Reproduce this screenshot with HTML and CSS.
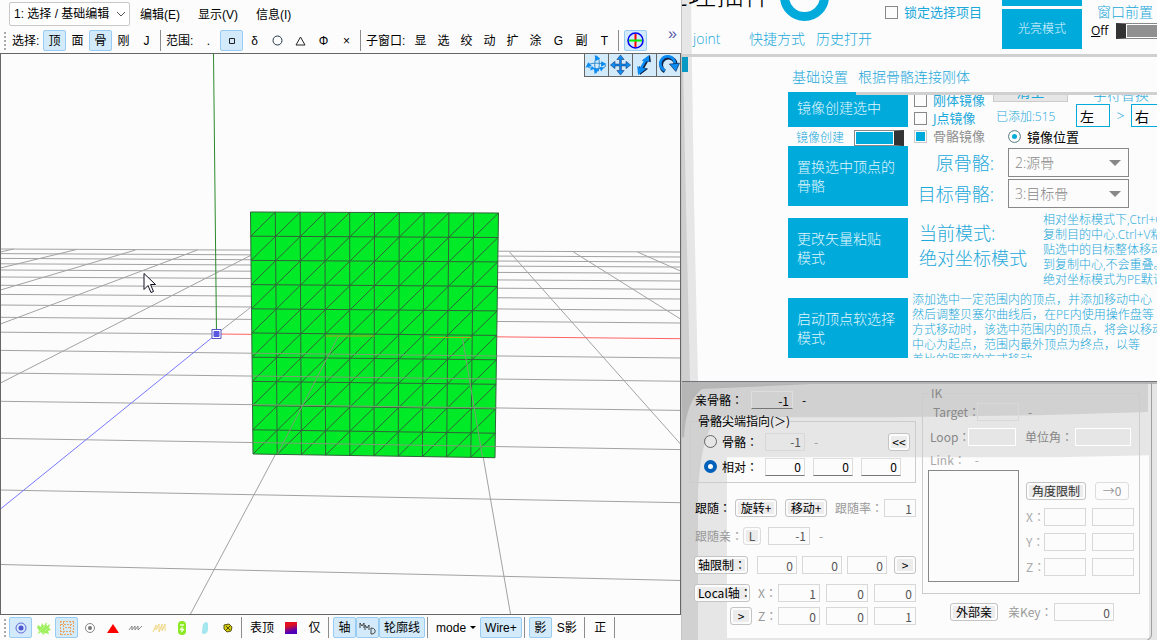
FILE: index.html
```html
<!DOCTYPE html>
<html lang="zh-CN">
<head>
<meta charset="utf-8">
<title>模型编辑器</title>
<link rel="stylesheet" href="styles.css">
</head>
<body>
<div class="workspace">
  <section class="editor">
    <header class="menubar">
      <span class="mode-box">
        <select class="mode-select" aria-label="编辑模式"><option>1: 选择 / 基础编辑</option></select>
        <svg class="mode-arrow" viewBox="0 0 10 6"><path d="M1 1l4 4 4-4" fill="none" stroke="#555"/></svg>
      </span>
      <button class="menu">编辑(E)</button>
      <button class="menu">显示(V)</button>
      <button class="menu">信息(I)</button>
    </header>
    <div class="toolbar">
      <i class="grip"></i>
      <span class="bar-label">选择:</span>
      <button class="tool on">顶</button><button class="tool">面</button><button class="tool on">骨</button><button class="tool">刚</button><button class="tool">J</button>
      <i class="sep"></i>
      <span class="bar-label">范围:</span>
      <button class="tool">.</button>
      <button class="tool on" aria-label="矩形"><svg width="8" height="8"><path d="M1.500 1.500h5v5h-5z" fill="none" stroke="#222"/></svg></button>
      <button class="tool">δ</button>
      <button class="tool" aria-label="圆形"><svg width="11" height="11"><circle cx="5.500" cy="5.500" r="4.500" fill="none" stroke="#234"/></svg></button>
      <button class="tool" aria-label="三角"><svg width="11" height="10"><path d="M5.500 1L10 9H1z" fill="none" stroke="#222"/></svg></button>
      <button class="tool">Φ</button><button class="tool">×</button>
      <i class="sep"></i>
      <span class="bar-label wide">子窗口:</span>
      <button class="tool">显</button><button class="tool">选</button><button class="tool">绞</button><button class="tool">动</button><button class="tool">扩</button><button class="tool">涂</button><button class="tool">G</button><button class="tool">副</button><button class="tool">T</button>
      <i class="sep"></i>
      <button class="tool on" aria-label="中心"><svg width="17" height="17"><path d="M8.500 2v13" stroke="#f00" stroke-width="2"/><path d="M2 8.500h13" stroke="#0e0" stroke-width="2"/><circle cx="8.500" cy="8.500" r="7.500" fill="none" stroke="#00e" stroke-width="1.500"/></svg></button>
      <button class="more" aria-label="更多">»</button>
    </div>
    <div class="viewport">
      <svg class="scene" viewBox="0 54 680 560" preserveAspectRatio="xMidYMid slice">
        <g id="ground" fill="none" stroke="#a2a2a2">
          <path d="M0 249L680 252M0 253.600L680 257M0 258.400L680 262M0 263.800L680 267M0 270L680 273.300M0 277L680 281M0 285.300L680 289.300M0 294.400L680 299M0 305L680 310.400M0 317.300L680 323M0 332.200L216 334M0 350.400L680 358M0 373L680 381.300M0 401.300L680 410.400M0 438.400L680 449.600M0 490L680 502.700M0 564.500L680 580.500"/>
          <path d="M13 249L0 252M76 249.500L0 268M135 250L0 290M197 250L0 324M250 255.500L0 383M250 307.500L216 334M338 336L190 614M462 338L510 614M509 252L680 444M573 252L680 319M637 252L680 271"/>
        </g>
        <path d="M213 54L216 334" stroke="#2a8a2a" stroke-width="1"/>
        <path d="M216 334L680 338.700" stroke="#ff6464"/>
        <path d="M216 334L0 509" stroke="#7878ff"/>
        <path d="M250 212L498 213L494.500 457.700L252.500 454z" fill="#00ea27"/>
        <path id="mesh" fill="none" stroke="#32623a" stroke-width="1"/>
        <g fill="none" stroke="#7f9f74"><path d="M251 353.200L497 356M252 376L496 379M252 404.700L496 408M253 442.500L495 446.500M338 336L277 454M462 338L482 457"/></g>
        <path d="M325 336H374M429 337.500H471" stroke="#b4a41c"/>
        <path d="M211.500 329.500h9v9h-9z" fill="#fff" stroke="#5656c8"/><path d="M213.500 331.500h5v5h-5z" fill="#5858e0" stroke="#5858e0"/>
        <path d="M143.500 273.500v16l4-4 3 7 2.500-1-3-7h5z" fill="#fff" stroke="#112"/>
      </svg>
      <div class="view-tools">
        <button aria-label="旋转"><svg viewBox="0 0 24 24"><g fill="none" stroke="#2a86c8" stroke-width="1"><ellipse cx="12" cy="13" rx="10" ry="3"/><path d="M12 2q-4 10 0 19M12 2q5 3 2 17"/></g><path d="M10 1l6 4-5 3zM10 22l5-5-6-2zM0 15l3-6 4 4zM23 11l-6-3v6zM5 18l5-2-3-3zM17 19l-2-5 5 1z" fill="#0a8cf4"/></svg></button>
        <button aria-label="移动"><svg viewBox="0 0 24 24"><path d="M12 1l4 5h-3v5h5V8l5 4-5 4v-3h-5v5h3l-4 5-4-5h3v-5H6v3l-5-4 5-4v3h5V6H8z" fill="#0a8cf4" stroke="#236" stroke-width=".6"/></svg></button>
        <button aria-label="缩放"><svg viewBox="0 0 24 24"><path d="M17 1l1 8-3-1-4 7 4 1-9 7-1-10 3 2 4-7-2-1z" fill="#124" transform="translate(1 0)"/><path d="M17 1l0 8-3-1-4 7 4 1-9 7-1-10 3 2 4-7-2-1z" fill="#0a8cf4"/></svg></button>
        <button aria-label="回转"><svg viewBox="0 0 24 24"><path d="M8 19A8 8 0 1 1 20 12" fill="none" stroke="#124" stroke-width="4"/><path d="M8 18A8 8 0 1 1 19 11" fill="none" stroke="#0a8cf4" stroke-width="3"/><path d="M13 11l11-1-4 9z" fill="#0a8cf4" stroke="#124" stroke-width=".7"/></svg></button>
      </div>
    </div>
    <footer class="toolbar status">
      <i class="grip"></i>
      <button class="tool on first" aria-label="顶点"><svg width="12" height="12"><circle cx="6" cy="6" r="5" fill="none" stroke="#6468d8"/><circle cx="6" cy="6" r="2.500" fill="#5054d0"/></svg></button>
      <button class="tool" aria-label="绿点"><svg width="14" height="14"><path d="M1 4l3 2 1-4 2 3 2-4 1 4 3-2-1 4 2 2-3 1 1 3-4-1-2 2-2-3-3 2 1-4-2-2z" fill="#9df05c"/><path d="M2 11l9-9M5 13l8-8" stroke="#d6ffba" stroke-dasharray="1 1"/></svg></button>
      <button class="tool on" aria-label="橙网"><svg width="16" height="16"><g fill="none" stroke="#eda662" stroke-dasharray="2 1"><path d="M1 1.500h14M2 4.500h12M1 11.500h14M2 14.500h12M1.500 1v14M4.500 2v12M11.500 1v14M14.500 2v12M6 7.500h5"/></g></svg></button>
      <button class="tool" aria-label="灰点"><svg width="12" height="12"><circle cx="6" cy="6" r="4.500" fill="none" stroke="#888"/><circle cx="6" cy="6" r="2" fill="#777"/></svg></button>
      <button class="tool" aria-label="红三角"><svg width="12" height="12"><path d="M6 2l6 9H0z" fill="#f00"/></svg></button>
      <button class="tool" aria-label="灰线"><svg width="15" height="8"><path d="M1 6l3-4v4l3-4v4l3-4v4l4-4" fill="none" stroke="#888"/></svg></button>
      <button class="tool" aria-label="黄线"><svg width="14" height="12"><path d="M1 10l3-7v5l3-6v8l3-8v7l3-7v7" fill="none" stroke="#efd680"/></svg></button>
      <button class="tool" aria-label="刚体"><svg width="10" height="16"><rect x="1" y="1" width="8" height="14" rx="4" fill="#8be822"/><path d="M3 5h4M3 10l2-2v3l2-2" stroke="#efffdc" stroke-width="1.500" fill="none"/></svg></button>
      <button class="tool" aria-label="胶囊"><svg width="8" height="14"><path d="M2 3q4-4 5 0v6q-1 4-4 4T1 10z" fill="#a5e7ee"/></svg></button>
      <button class="tool" aria-label="关节"><svg width="10" height="10"><path d="M1 2l5-1 3 3-1 4-4 1-3-3z" fill="#d6cc12" stroke="#555010"/><path d="M3 3l4 4M7 3L3 7" stroke="#555010"/></svg></button>
      <i class="sep"></i>
      <button class="tool text">表顶</button>
      <button class="tool swatch-btn" aria-label="颜色"><i class="swatch"></i></button>
      <button class="tool">仅</button>
      <i class="sep"></i>
      <button class="tool on">轴</button>
      <button class="tool on" aria-label="MMD"><svg width="18" height="14"><path d="M1 7V2l2 3 2-3v5M6 9V4l2 3 2-3v5M12 7v6q5 0 4-4-1-2-4-2z" fill="none" stroke="#444"/></svg></button>
      <button class="tool on text">轮廓线</button>
      <i class="sep"></i>
      <button class="tool text mode">mode <i class="caret"></i></button>
      <button class="tool on text wire">Wire+</button>
      <i class="sep"></i>
      <button class="tool on">影</button>
      <button class="tool text">S影</button>
      <i class="sep"></i>
      <button class="tool">正</button>
      <i class="sep"></i>
    </footer>
  </section>

  <section class="side">
    <div class="plugin">
      <svg class="edge-shade" viewBox="0 0 20 381" preserveAspectRatio="none"><path d="M0 0h9l3 200 4 181H0z" fill="#e6e6e6"/><path d="M0 57h1l3 150 4 174H0z" fill="#cfcfcf"/></svg>
      <header class="plugin-head">
        <div class="brand-area">
          <div class="brand-row">
            <h1 class="brand">处理插件</h1>
            <i class="ring"></i>
            <label class="check lock"><input type="checkbox">锁定选择项目</label>
          </div>
          <nav class="nav"><a href="#joint">joint</a><a href="#quick">快捷方式</a><a href="#history">历史打开</a></nav>
        </div>
        <div class="bright"><i class="bright-bar"></i><button class="bright-btn">光亮模式</button></div>
        <div class="front"><span class="front-title">窗口前置</span><label class="front-row"><u>O</u>ff <input type="checkbox" class="switch"></label></div>
      </header>
      <div class="plugin-body">
        <i class="accent"></i>
        <nav class="tabs"><a href="#basic">基础设置</a><a href="#connect">根据骨骼连接刚体</a></nav>
        <div class="content">
          <div class="actions">
            <button class="action short">镜像创建选中</button>
            <label class="switch-row">镜像创建 <input type="checkbox" class="switch blue" checked></label>
            <button class="action">置换选中顶点的骨骼</button>
            <button class="action third">更改矢量粘贴<br>模式</button>
            <button class="action fourth">启动顶点软选择模式</button>
          </div>
          <div class="options">
            <div class="mirror">
              <div class="checks">
                <label class="check"><input type="checkbox">刚体镜像</label>
                <label class="check"><input type="checkbox">J点镜像</label>
                <label class="check dim"><input type="checkbox" checked>骨骼镜像</label>
              </div>
              <div class="added">
                <button class="clear">清空</button>
                <span class="count">已添加:515</span>
                <label class="pos"><input type="radio" checked>镜像位置</label>
              </div>
              <div class="replace">
                <span class="replace-title">字符替换</span>
                <div class="replace-row"><input class="side-input" value="左" aria-label="原字符"><span>&gt;</span><input class="side-input" value="右" aria-label="新字符"></div>
              </div>
            </div>
            <div class="bone-row"><label for="src">原骨骼:</label><span class="drop"><select id="src"><option>2:源骨</option></select></span></div>
            <div class="bone-row"><label for="dst">目标骨骼:</label><span class="drop"><select id="dst"><option>3:目标骨</option></select></span></div>
            <div class="mode-info">
              <p class="current">当前模式:<br>绝对坐标模式</p>
              <p class="hint">相对坐标模式下,Ctrl+C<br>复制目的中心.Ctrl+V粘<br>贴选中的目标整体移动<br>到复制中心,不会重叠。<br>绝对坐标模式为PE默认</p>
            </div>
            <p class="hint soft">添加选中一定范围内的顶点，并添加移动中心<br>然后调整贝塞尔曲线后，在PE内使用操作盘等<br>方式移动时，该选中范围内的顶点，将会以移动<br>中心为起点，范围内最外顶点为终点，以等<br>差比的距离的方式移动</p>
          </div>
        </div>
      </div>
    </div>

    <form class="bones" lang="ja">
      <svg class="bones-shade" viewBox="0 0 475 258" preserveAspectRatio="none">
        <path d="M0 0h475v258H0z" fill="#e6e6e6"/>
        <path d="M45 76h330l92-2v182H45z" fill="#fcfcfc"/>
        <path d="M0 0h466v31l-110 3-150 2H40Q20 42 16 110v148H0z" fill="#d1d1d1"/>
        <path d="M0 0h475v3H130L20 8Q4 20 2 56H0z" fill="#b6b6b6"/>
        <path d="M0 .5h475" stroke="#707478"/>
        <path d="M469.500 2v250q0 4-4 6" fill="none" stroke="#a0a0a0"/>
      </svg>
      <div class="left-col">
        <div class="row r1"><label for="parent" class="w56">亲骨骼：</label><input id="parent" class="num line w42" value="-1"><span class="dash">-</span></div>
        <fieldset class="tip">
          <legend>骨骼尖端指向(＞)</legend>
          <div class="row"><label class="opt"><input type="radio" name="tip">骨骼：</label><input class="num w40 dim" value="-1" aria-label="骨骼"><span class="dash dim">-</span><button type="button" class="btn push">&lt;&lt;</button></div>
          <div class="row"><label class="opt"><input type="radio" name="tip" checked>相对：</label><span class="nums"><input class="num line w40" value="0" aria-label="相对 X"><input class="num line w40" value="0" aria-label="相对 Y"><input class="num line w40" value="0" aria-label="相对 Z"></span></div>
        </fieldset>
        <div class="row r3"><span class="w40">跟随：</span><button type="button" class="btn w42">旋转+</button><button type="button" class="btn w42">移动+</button><label for="rate" class="dim rate">跟随率：</label><input id="rate" class="num w32 push" value="1"></div>
        <div class="row r4"><label for="fp" class="dim w48">跟随亲：</label><button type="button" class="btn dim w18">L</button><input id="fp" class="num w42" value="-1"><span class="dash dim">-</span></div>
        <div class="row r5"><button type="button" class="btn w54">轴限制：</button><span class="nums tight"><input class="num w40" value="0" aria-label="轴 X"><input class="num w40" value="0" aria-label="轴 Y"><input class="num w40" value="0" aria-label="轴 Z"></span><button type="button" class="btn push">&gt;</button></div>
        <div class="row r6"><button type="button" class="btn w56">Local轴：</button><span class="nums vec"><span class="dim axis">X：</span><input class="num w42" value="1" aria-label="X1"><input class="num w42" value="0" aria-label="X2"><input class="num w42" value="0" aria-label="X3"></span></div>
        <div class="row r7"><button type="button" class="btn next">&gt;</button><span class="nums vec"><span class="dim axis">Z：</span><input class="num w42" value="0" aria-label="Z1"><input class="num w42" value="0" aria-label="Z2"><input class="num w42" value="1" aria-label="Z3"></span></div>
      </div>
      <div class="right-col">
        <fieldset class="ik">
          <legend>IK</legend>
          <div class="row target"><label for="target">Target：</label><input id="target" class="num w42"><span class="dash">-</span></div>
          <div class="row loop"><label for="loop">Loop：</label><input id="loop" class="num w48 light"><label for="angle">单位角：</label><input id="angle" class="num w56 light"></div>
          <div class="row link">Link：<span class="dash">-</span></div>
          <div class="ik-body">
            <select class="list" size="2" aria-label="Link"></select>
            <div class="limits">
              <div class="limit-head"><button type="button" class="btn w60">角度限制</button><button type="button" class="btn faint w34">→0</button></div>
              <div class="limit"><span>X：</span><input class="num w42" aria-label="X 下限"><input class="num w42" aria-label="X 上限"></div>
              <div class="limit"><span>Y：</span><input class="num w42" aria-label="Y 下限"><input class="num w42" aria-label="Y 上限"></div>
              <div class="limit"><span>Z：</span><input class="num w42" aria-label="Z 下限"><input class="num w42" aria-label="Z 上限"></div>
            </div>
          </div>
        </fieldset>
        <div class="row outer"><button type="button" class="btn w48">外部亲</button><label for="key" class="dim">亲Key：</label><input id="key" class="num w60" value="0"></div>
      </div>
    </form>
  </section>
</div>
<script src="mesh.js"></script>
</body>
</html>
```
FILE: styles.css
```css
* { box-sizing: border-box; }
body { margin: 0; background: #fcfcfc; color: #000; font: 12px/16px "Liberation Sans", "Noto Sans CJK SC", sans-serif; }
button, input, select { font: inherit; color: inherit; margin: 0; padding: 0; background: none; border: 0; border-radius: 0; }
a { color: inherit; text-decoration: none; }
h1, p, fieldset { margin: 0; padding: 0; border: 0; }
i { display: block; flex: none; }
label, span, button { white-space: nowrap; }
.workspace { display: grid; grid-template-columns: minmax(0, 682fr) minmax(0, 475fr); min-height: 100vh; overflow: hidden; }

/* Editor */
.editor { display: flex; flex-direction: column; min-width: 0; border-right: 1px solid #c4c4c4; }
.menubar { display: flex; align-items: center; height: 28px; padding-left: 9px; gap: 18px; }
.mode-box { position: relative; margin-right: -8px; }
.mode-select { width: 121px; height: 24px; padding-left: 4px; border: 1px solid #c8c8c8; border-radius: 2px; appearance: none; background: #fff; }
.mode-arrow { position: absolute; right: 4px; top: 9px; width: 10px; height: 6px; }
.menu { padding-top: 2px; }
.toolbar { display: flex; align-items: center; height: 25px; padding-left: 4px; }
.grip { width: 2px; height: 18px; margin-right: 6px; background: repeating-linear-gradient(#aaa 0 2px, transparent 2px 4px); }
.bar-label { width: 31px; }
.bar-label.wide { width: 43px; }
.tool { flex: none; display: flex; align-items: center; justify-content: center; width: 23px; height: 21px; border: 1px solid transparent; border-radius: 2px; }
.tool.on { background: #d2eafa; border-color: #98ccf2; }
.sep { width: 1px; height: 21px; margin: 0 5px 0 2px; background: #8c8c8c; }
.more { margin: -14px 4px 0 auto; color: #5a5aa8; font-size: 16px; }
.viewport { position: relative; flex: 1; min-height: 0; border: 1px solid #666; overflow: hidden; }
.scene { position: absolute; inset: 0; width: 100%; height: 100%; }
.view-tools { position: absolute; top: 0; right: 0; display: flex; gap: 1px; padding: 0 0 1px 1px; background: #666; }
.view-tools button { width: 23px; height: 22px; background: #d2eafa; }
.view-tools svg { display: block; width: 23px; height: 22px; }
.status .grip { margin-right: 3px; }
.status .sep { margin: 0 4px 0 2px; }
.tool.text { width: auto; padding: 0 4px; }
.status .sep + .tool.text { padding-left: 3px; }
.swatch-btn { width: 24px; }
.swatch { width: 12px; height: 12px; background: linear-gradient(165deg, #e01020 30%, #5000b8 75%); }
.tool.mode { gap: 4px; padding: 0 3px; }
.caret { border: 3px solid transparent; border-top-color: #000; border-bottom: 0; }

/* Plugin window */
.side { display: flex; flex-direction: column; min-width: 0; font-family: "Open Sans", "Noto Sans CJK SC", sans-serif; }
.plugin { position: relative; height: 381px; overflow: hidden; color: #1ba8da; font-weight: 300; }
.edge-shade { position: absolute; left: 0; top: 0; width: 20px; height: 100%; }
.plugin-head { position: relative; display: flex; height: 57px; border-bottom: 3px solid #d0d0d0; overflow: hidden; }
.brand-area { flex: none; width: 320px; }
.brand-row { display: flex; height: 28px; }
.brand { width: 98px; margin-top: -26px; color: #000; font-size: 28px; line-height: 40px; font-weight: 300; white-space: nowrap; direction: rtl; padding-right: 8px; }
.ring { width: 49px; height: 49px; margin-top: -28px; border: 9px solid #00abdc; border-radius: 50%; }
.check { display: flex; align-items: center; gap: 6px; height: 18px; font-size: 13px; font-weight: 400; }
.check input { appearance: none; flex: none; width: 13px; height: 13px; border: 1px solid #888; }
.check input:checked { background: #00abdc; border-color: #ccc; box-shadow: inset 0 0 0 1px #fff; }
.check.dim { color: #909090; }
.lock { margin: 3px 0 0 56px; }
.nav { display: flex; padding-left: 11px; font-size: 14px; line-height: 22px; }
.nav a:nth-child(1) { width: 56px; }
.nav a:nth-child(2) { width: 67px; }
.bright { flex: none; width: 80px; display: flex; flex-direction: column; gap: 3px; }
.bright-bar { height: 6px; background: #00abdc; }
.bright-btn { height: 40px; background: #00abdc; color: #e4f6fc; }
.front { padding: 2px 0 0 9px; }
.front-title { display: block; padding-left: 6px; font-size: 14px; line-height: 20px; }
.front-row { display: flex; align-items: center; height: 18px; color: #000; font-weight: 400; }
.switch { appearance: none; flex: none; width: 50px; height: 16px; margin-left: 8px; border: 1px solid #888; border-left: 10px solid #333; background: #909090; box-shadow: inset 0 0 0 1px #fff; }
.plugin-body { position: relative; }
.accent { position: absolute; left: 0; top: 0; width: 6px; height: 15px; background: #0898c4; }
.tabs { display: flex; gap: 10px; padding: 4px 0 0 110px; height: 35px; align-items: center; font-size: 14px; line-height: 20px; }
.content { display: flex; padding-left: 106px; height: 266px; overflow: hidden; }
.actions { flex: none; width: 120px; display: flex; flex-direction: column; }
.action { height: 60px; padding: 0 9px 1px; background: #00abdc; color: #e4f6fc; font-size: 14px; line-height: 19px; text-align: left; white-space: normal; font-weight: 300; }
.action.short { height: 35px; padding-bottom: 4px; }
.action.third { margin-top: 12px; }
.action.fourth { margin-top: 20px; }
.switch-row { display: flex; align-items: center; justify-content: space-between; height: 19px; padding: 2px 4px 0 8px; }
.switch.blue { border: 1px solid #888; border-right: 10px solid #333; background: #00abdc; }
.options { flex: 1; min-width: 0; height: 266px; overflow: hidden; border-top: 3px solid #d0d0d0; margin-left: -52px; padding-left: 52px; }
.mirror { display: flex; height: 52px; overflow: hidden; padding-left: 6px; }
.checks { flex: none; width: 79px; margin-top: -4px; }
.added { flex: none; width: 83px; }
.clear { width: 75px; height: 18px; margin-top: -11px; padding-bottom: 4px; border: 1px solid #ccc; background: #e6e6e6; font-size: 14px; line-height: 14px; display: block; font-weight: 400; }
.count { display: block; padding: 5px 0 0 3px; line-height: 19px; }
.pos { display: flex; align-items: center; gap: 6px; height: 21px; padding-left: 15px; color: #000; font-size: 13px; font-weight: 400; }
.pos input { appearance: none; flex: none; width: 13px; height: 13px; border: 1px solid #888; border-radius: 50%; background: #00abdc; box-shadow: inset 0 0 0 3px #fcfcfc; }
.replace-title { display: block; height: 9px; padding-left: 17px; font-size: 14px; line-height: 0; }
.replace-row { display: flex; align-items: center; font-size: 14px; }
.side-input { width: 34px; height: 23px; padding-left: 3px; border: 1px solid #00abdc; color: #000; font-weight: 400; }
.replace-row span { width: 21px; text-align: center; }
.bone-row { display: flex; align-items: center; gap: 14px; height: 31px; font-size: 18px; }
.bone-row label { width: 86px; text-align: right; }
.drop { position: relative; }
.drop::after { content: ""; position: absolute; right: 8px; top: 12px; border: 6px solid transparent; border-top-color: #888; border-bottom: 0; }
.drop select { appearance: none; display: block; width: 121px; height: 29px; padding-left: 6px; border: 1px solid #888; color: #888; font-size: 14px; font-weight: 300; }
.mode-info { display: flex; height: 80px; }
.current { flex: none; width: 135px; padding: 12px 0 0 11px; font-size: 18px; line-height: 25px; white-space: nowrap; }
.hint { font-size: 12px; line-height: 15px; white-space: nowrap; padding-top: 3px; }
.hint.soft { padding: 3px 0 0 4px; height: 70px; overflow: hidden; }

/* Bone form */
.bones { position: relative; flex: 1; display: grid; grid-template-columns: 226px 217px; gap: 6px; align-items: start; padding: 1px 0 0 8px; font-family: "Noto Sans CJK JP", sans-serif; }
.bones-shade { position: absolute; inset: 0; width: 100%; height: 100%; }
.left-col, .right-col { position: relative; }
.row { display: flex; align-items: center; height: 25px; }
.left-col > .row { padding-left: 5px; }
.dim { color: #999; }
.num { flex: none; height: 18px; padding: 0 3px; border: 1px solid #d8d8d8; text-align: right; color: #555; }
.num.line { border-color: #dedede; border-bottom-color: #777; color: #000; }
.num.light { border-color: #fff; }
.nums { display: flex; align-items: center; gap: 8px; }
.nums.tight { gap: 5px; margin-left: 9px; }
.nums.vec { gap: 6px; margin-left: auto; }
.axis { width: 14px; }
.dash { margin-left: 9px; }
.btn { flex: none; height: 18px; min-width: 22px; padding: 0 3px; line-height: 14px; border: 1px solid #c4c4c4; border-radius: 3px; background: #ececec; box-shadow: inset 0 0 0 2px #fcfcfc; }
.btn.dim { color: #555; border-color: #ddd; }
.btn.faint { color: #999; border-color: #ddd; background: #fcfcfc; }
.push { margin-left: auto; }
.w18 { width: 18px; min-width: 18px; } .w32 { width: 32px; } .w34 { width: 34px; } .w40 { width: 40px; } .w42 { width: 42px; }
.w48 { width: 48px; } .w54 { width: 54px; } .w56 { width: 56px; } .w60 { width: 60px; }
.left-col .r1 { height: 32px; padding-top: 4px; }
.tip { position: relative; border: 1px solid #ccc; padding: 1px 5px 3px 13px; }
.tip legend { margin-left: -6px; line-height: 14px; height: 14px; padding: 0; }
.opt { display: flex; align-items: center; gap: 5px; width: 61px; }
.opt input { appearance: none; flex: none; width: 13px; height: 13px; border: 1px solid #666; border-radius: 50%; }
.opt input:checked { border: 4px solid #0060ba; background: #fff; }
.r3 { height: 28px; margin-top: 11px; }
.r3 .btn { margin-right: 8px; }
.rate { margin-right: -4px; }
.r4 { height: 27px; }
.r4 .num { margin-left: 7px; }
.left-col .r5 { height: 32px; padding-left: 4px; }
.left-col .r6 { height: 24px; padding-left: 4px; }
.left-col .r7 { height: 22px; padding-left: 40px; }
.ik { margin-top: 4px; height: 208px; border: 1px solid #ccc; padding: 0 5px; color: #888; }
.ik legend { margin-left: 1px; padding: 0 2px; line-height: 14px; height: 14px; }
.target { height: 24px; padding-left: 5px; }
.target label { width: 44px; }
.loop { padding-left: 2px; }
.loop label:first-child { width: 38px; }
.loop label:nth-of-type(2) { width: 50px; margin-left: 9px; }
.link { height: 21px; padding-left: 2px; color: #aaa; }
.ik-body { display: flex; gap: 7px; }
.list { width: 91px; height: 112px; border: 1px solid #888; overflow: hidden; background: #fcfcfc; }
.limits { padding-top: 12px; color: #aaa; }
.limit-head { display: flex; gap: 9px; margin-bottom: 4px; color: #333; }
.limit { display: flex; align-items: center; height: 25px; gap: 6px; }
.limit span { width: 12px; }
.outer { height: 36px; padding-left: 28px; }
.outer label { width: 46px; margin-left: 10px; }
```
FILE: mesh.js
```js
// Wireframe of the 10 x 10 plane, in perspective between its four corners.
const N = 10;
const corners = { tl: [250, 212], tr: [498, 213], br: [494.5, 457.7], bl: [252.5, 454] };
const mix = (a, b, t) => a + (b - a) * t;
function point(i, j) {
  return [0, 1].map(k => mix(
    mix(corners.tl[k], corners.tr[k], i / N),
    mix(corners.bl[k], corners.br[k], i / N), j / N).toFixed(1)).join(" ");
}
let d = "";
for (let k = 0; k <= N; k++) {
  d += `M${point(k, 0)}L${point(k, N)}M${point(0, k)}L${point(N, k)}`;
  if (k) d += `M${point(k, 0)}L${point(0, k)}M${point(N, k)}L${point(k, N)}`;
}
document.getElementById("mesh").setAttribute("d", d);
```
